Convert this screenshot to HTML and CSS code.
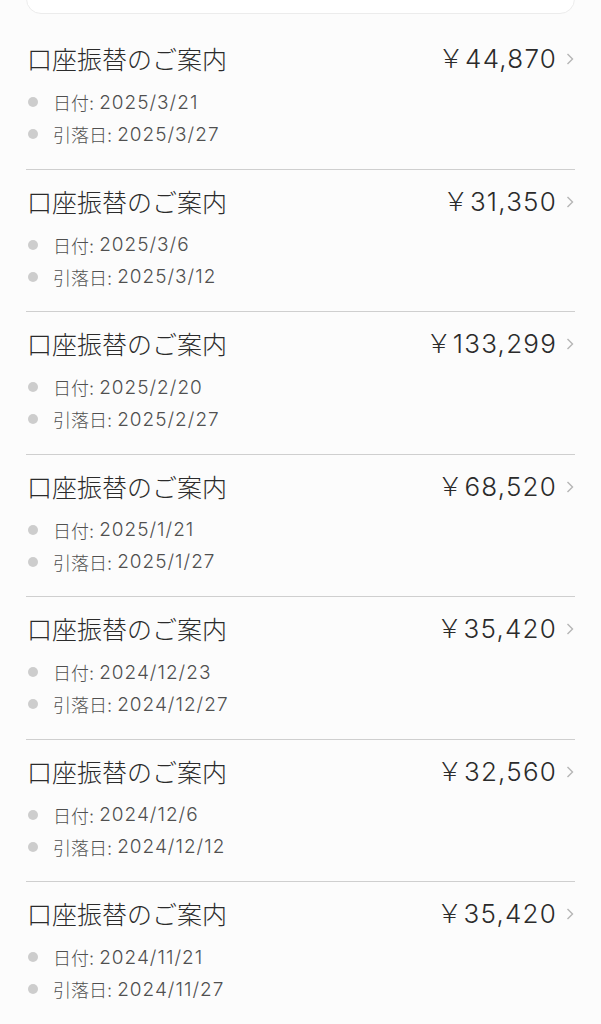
FILE: index.html
```html
<!DOCTYPE html>
<html lang="ja">
<head>
<meta charset="utf-8">
<link rel="stylesheet" href="styles.css">
</head>
<body>
<div class="page">
  <div class="topcard"><div class="topcard-mark"></div></div>
  <ul class="list">
    <li class="item">
      <div class="row"><span class="title">口座振替のご案内</span><span class="amount">￥44,870<svg class="chev" viewBox="0 0 8 12"><polyline points="1.5,1 6.5,6 1.5,11"/></svg></span></div>
      <div class="meta"><span class="dot"></span>日付: <span class="date">2025/3/21</span></div>
      <div class="meta"><span class="dot"></span>引落日: <span class="date">2025/3/27</span></div>
    </li>
    <li class="item">
      <div class="row"><span class="title">口座振替のご案内</span><span class="amount">￥31,350<svg class="chev" viewBox="0 0 8 12"><polyline points="1.5,1 6.5,6 1.5,11"/></svg></span></div>
      <div class="meta"><span class="dot"></span>日付: <span class="date">2025/3/6</span></div>
      <div class="meta"><span class="dot"></span>引落日: <span class="date">2025/3/12</span></div>
    </li>
    <li class="item">
      <div class="row"><span class="title">口座振替のご案内</span><span class="amount">￥133,299<svg class="chev" viewBox="0 0 8 12"><polyline points="1.5,1 6.5,6 1.5,11"/></svg></span></div>
      <div class="meta"><span class="dot"></span>日付: <span class="date">2025/2/20</span></div>
      <div class="meta"><span class="dot"></span>引落日: <span class="date">2025/2/27</span></div>
    </li>
    <li class="item">
      <div class="row"><span class="title">口座振替のご案内</span><span class="amount">￥68,520<svg class="chev" viewBox="0 0 8 12"><polyline points="1.5,1 6.5,6 1.5,11"/></svg></span></div>
      <div class="meta"><span class="dot"></span>日付: <span class="date">2025/1/21</span></div>
      <div class="meta"><span class="dot"></span>引落日: <span class="date">2025/1/27</span></div>
    </li>
    <li class="item">
      <div class="row"><span class="title">口座振替のご案内</span><span class="amount">￥35,420<svg class="chev" viewBox="0 0 8 12"><polyline points="1.5,1 6.5,6 1.5,11"/></svg></span></div>
      <div class="meta"><span class="dot"></span>日付: <span class="date">2024/12/23</span></div>
      <div class="meta"><span class="dot"></span>引落日: <span class="date">2024/12/27</span></div>
    </li>
    <li class="item">
      <div class="row"><span class="title">口座振替のご案内</span><span class="amount">￥32,560<svg class="chev" viewBox="0 0 8 12"><polyline points="1.5,1 6.5,6 1.5,11"/></svg></span></div>
      <div class="meta"><span class="dot"></span>日付: <span class="date">2024/12/6</span></div>
      <div class="meta"><span class="dot"></span>引落日: <span class="date">2024/12/12</span></div>
    </li>
    <li class="item">
      <div class="row"><span class="title">口座振替のご案内</span><span class="amount">￥35,420<svg class="chev" viewBox="0 0 8 12"><polyline points="1.5,1 6.5,6 1.5,11"/></svg></span></div>
      <div class="meta"><span class="dot"></span>日付: <span class="date">2024/11/21</span></div>
      <div class="meta"><span class="dot"></span>引落日: <span class="date">2024/11/27</span></div>
    </li>
  </ul>
</div>
</body>
</html>
```
FILE: styles.css
```css
html, body {
  margin: 0;
  padding: 0;
  background: #fcfcfc;
}
body {
  font-family: Inter, "Noto Sans CJK JP", sans-serif;
  color: #333;
  overflow: hidden;
}
.page {
  padding: 0 26px;
}
.topcard {
  height: 60px;
  margin-top: -46px;
  background: #fff;
  border: 1px solid #ececec;
  border-radius: 15px;
  box-sizing: border-box;
  display: flex;
  justify-content: center;
  align-items: flex-end;
  padding-bottom: 13px;
}
.topcard-mark {
  width: 64px;
  height: 1px;
  background: #f2f2f2;
}
.list {
  list-style: none;
  margin: 13px 0 0;
  padding: 0;
}
.item {
  padding: 15px 0 18.5px;
  border-bottom: 1px solid #cfcfcf;
}
.row {
  display: flex;
  justify-content: space-between;
  align-items: center;
  height: 32px;
  margin-bottom: 12px;
}
.title {
  font-family: "Noto Sans CJK JP", sans-serif;
  font-size: 25px;
  font-weight: 300;
  color: #2b2b2b;
  padding-left: 1px;
  line-height: 32px;
}
.amount {
  font-size: 26px;
  font-weight: 300;
  letter-spacing: 1.2px;
  color: #2b2b2b;
  display: flex;
  align-items: center;
  line-height: 32px;
  padding-top: 2px;
}
.chev {
  width: 8px;
  height: 12px;
  margin-left: 9px;
  margin-right: 1px;
  fill: none;
  stroke: #b5b5b5;
  stroke-width: 1.4;
}
.meta {
  display: flex;
  align-items: center;
  height: 32px;
  font-size: 18px;
  font-weight: 300;
  color: #505050;
  white-space: pre;
}
.date {
  font-size: 19px;
  letter-spacing: 1px;
}
.dot {
  width: 10px;
  height: 10px;
  border-radius: 50%;
  background: #cdcdcd;
  margin: 0 15px 0 2px;
}
```
